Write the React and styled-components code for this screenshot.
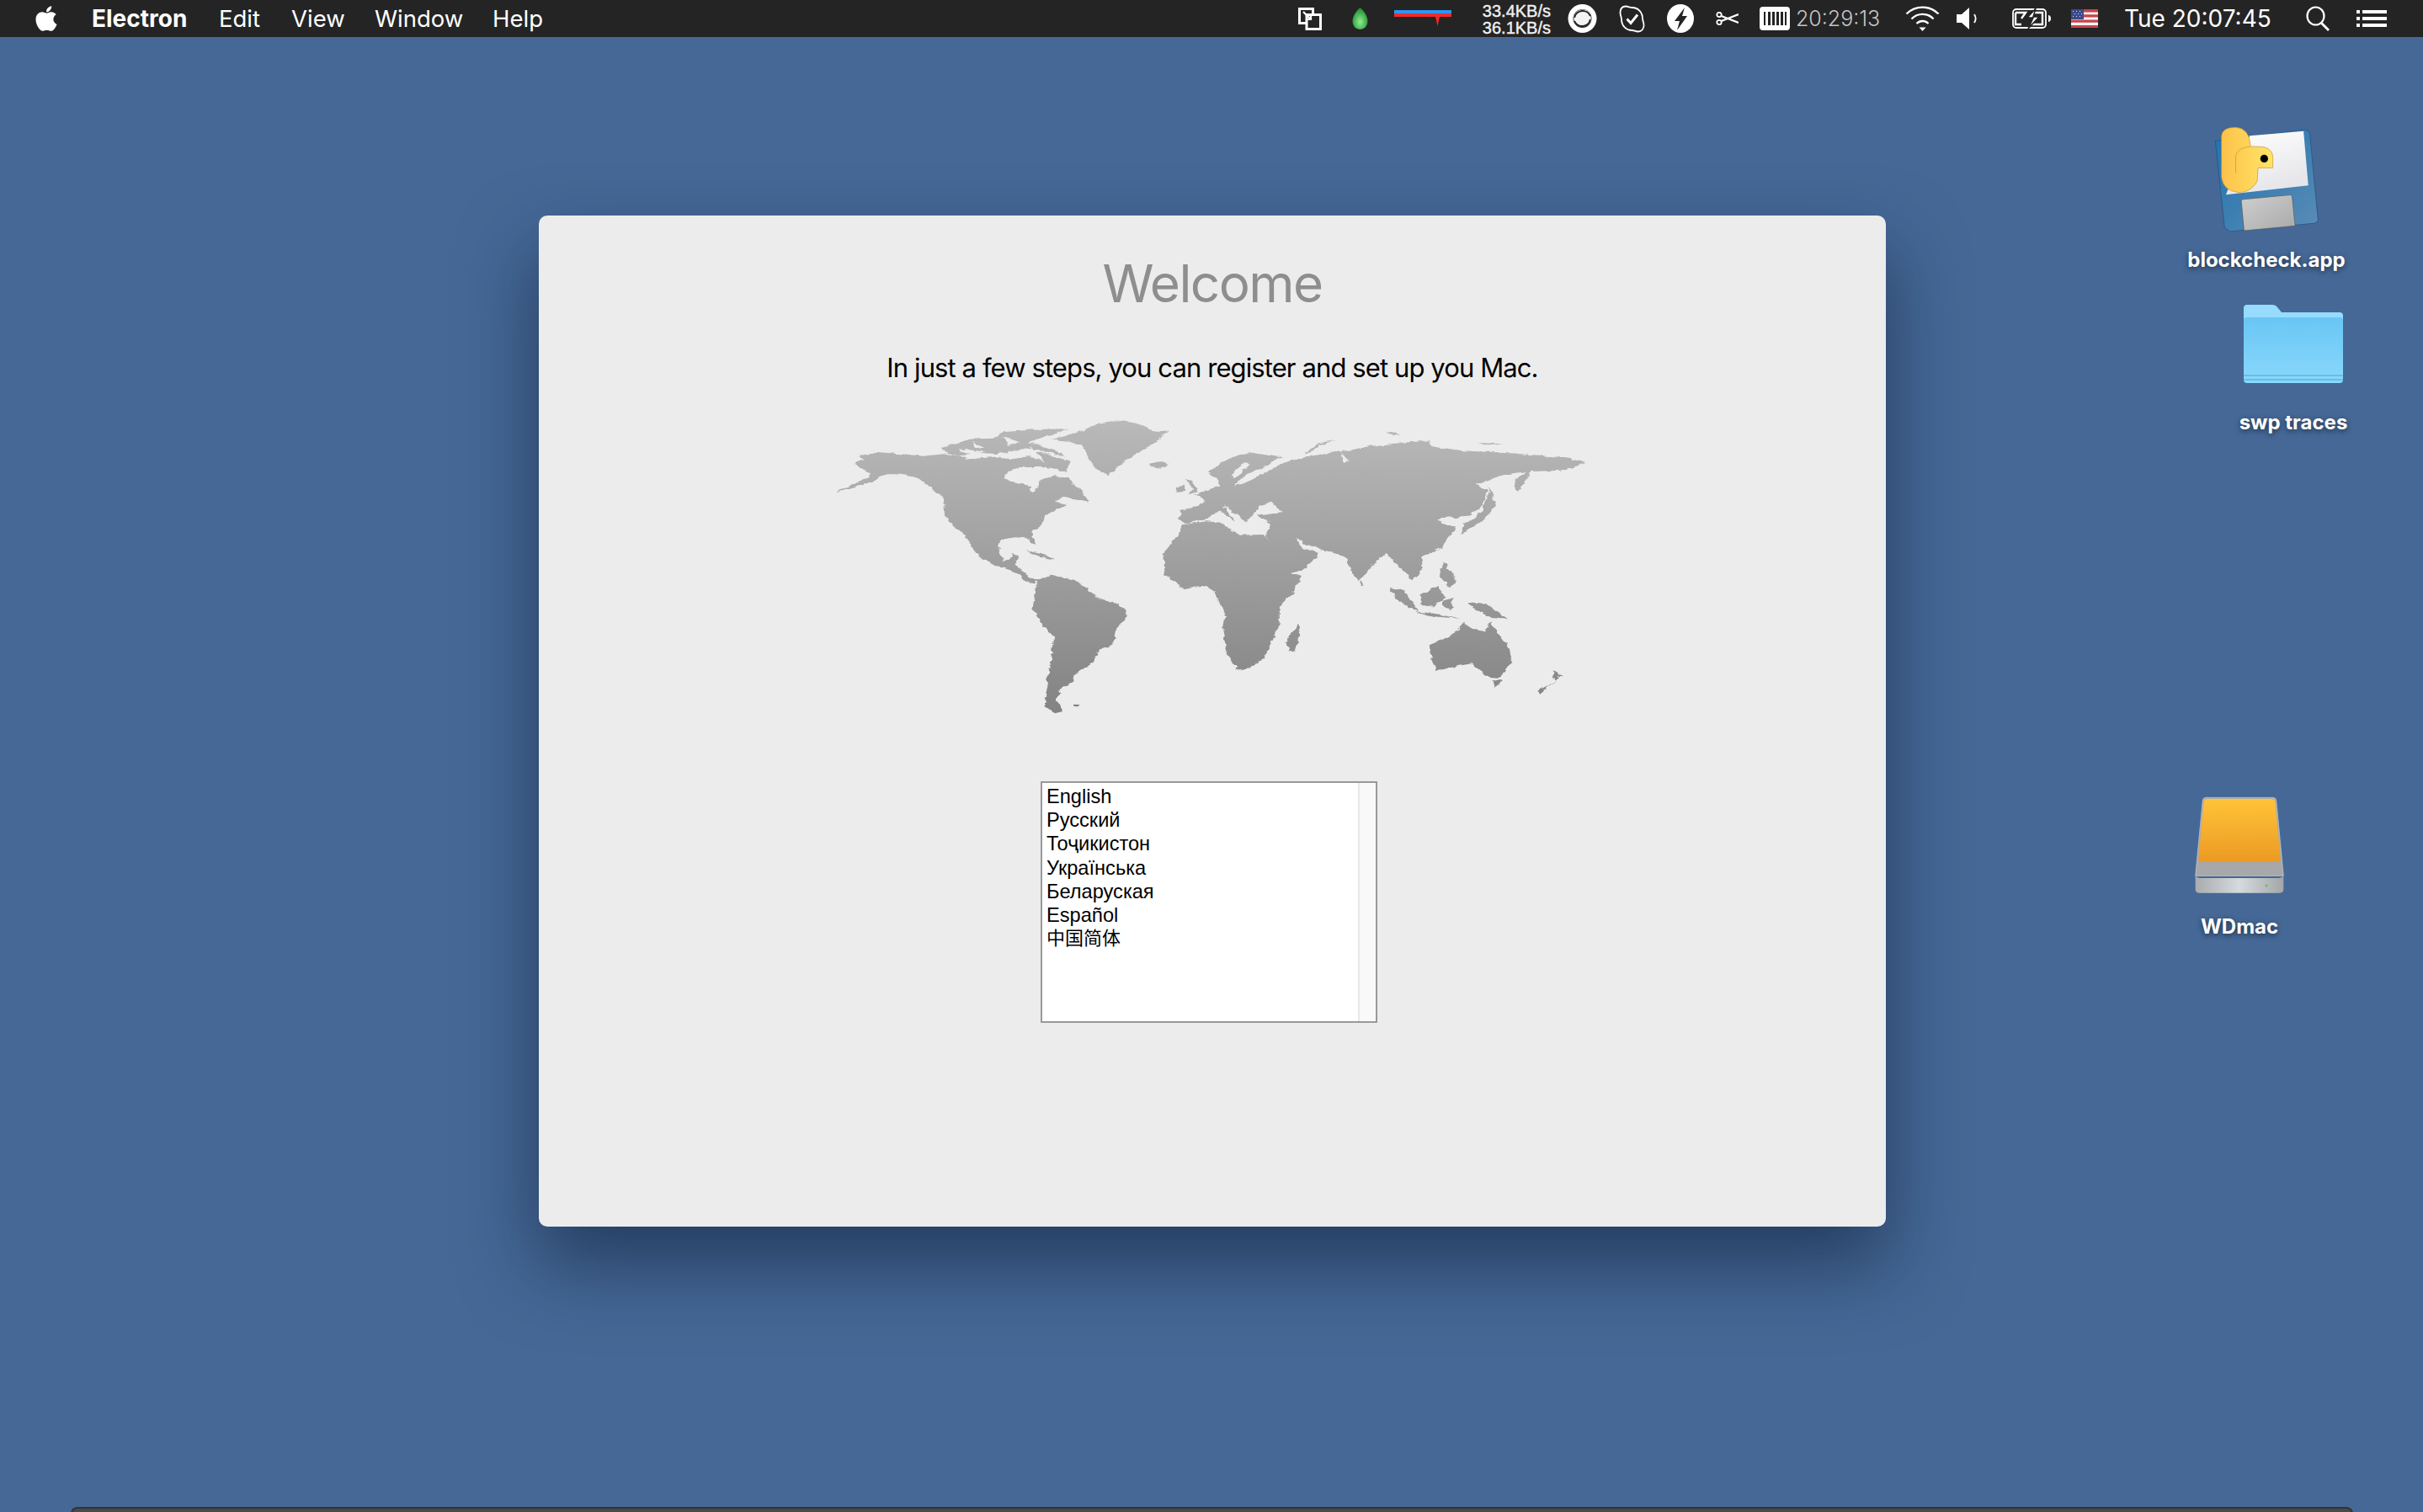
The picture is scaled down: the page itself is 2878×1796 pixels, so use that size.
import React from 'react'
import styled, { createGlobalStyle } from 'styled-components'
import { FaApple } from 'react-icons/fa'

const GlobalStyle = createGlobalStyle`
  html, body {
    margin: 0;
    padding: 0;
    background: #456896;
    overflow: hidden;
  }
`

const Desktop = styled.div`
  position: relative;
  width: 2878px;
  height: 1796px;
  overflow: hidden;
  background: #456896;
  font-family: Inter, "Liberation Sans", sans-serif;
`

const MenuBar = styled.div`
  height: 44px;
  background: #242424;
  display: flex;
  align-items: center;
  justify-content: space-between;
  padding: 0 43px 0 42px;
  color: #fff;
`

const MenuLeft = styled.div`
  display: flex;
  align-items: center;
`

const AppleLogo = styled(FaApple)`
  width: 30px;
  height: 34px;
  margin-right: 39px;
  margin-left: -2px;
`

const MenuItem = styled.span`
  font-size: ${(p) => (p.$bold ? 28 : 27.5)}px;
  line-height: 44px;
  font-weight: ${(p) => (p.$bold ? 700 : 400)};
  width: ${(p) => p.$w}px;
  white-space: nowrap;
`

const Tray = styled.div`
  display: flex;
  align-items: center;
  height: 44px;
`

const TrayItem = styled.div`
  margin-left: ${(p) => p.$ml}px;
  width: ${(p) => p.$w}px;
  height: 44px;
  flex: none;
  display: flex;
  align-items: center;
  white-space: nowrap;
  svg {
    display: block;
  }
`

const NetSpeed = styled.div`
  font-family: "Liberation Sans", sans-serif;
  font-size: 20px;
  line-height: 20px;
  font-weight: 400;
  color: #f0f0f0;
  -webkit-text-stroke: 0.4px #f0f0f0;
  text-align: right;
  width: 100%;
  margin-top: 2px;
`

const Uptime = styled.span`
  font-size: 25px;
  font-weight: 300;
  color: #c4c4c4;
`

const Clock = styled.span`
  font-size: 28px;
  font-weight: 400;
  color: #fff;
`

const Window = styled.div`
  position: absolute;
  left: 640px;
  top: 256px;
  width: 1600px;
  height: 1201px;
  background: #ececec;
  border-radius: 10px;
  box-shadow: 0 44px 90px rgba(10, 25, 50, 0.55);
  display: flex;
  flex-direction: column;
  align-items: center;
  padding-top: 43px;
  box-sizing: border-box;
`

const Title = styled.h1`
  margin: 0;
  font-size: 62px;
  line-height: 76px;
  font-weight: 400;
  color: #8e8e8e;
  letter-spacing: -1.6px;
`

const Subtitle = styled.p`
  margin: 42px 0 0;
  font-size: 31px;
  line-height: 40px;
  font-weight: 400;
  color: #000;
  letter-spacing: -0.9px;
`

const MapBox = styled.svg`
  display: block;
  width: 920px;
  height: 380px;
  margin-top: 23px;
  flex: none;
`

const ListBox = styled.div`
  margin: 68px 8px 0 0;
  width: 400px;
  height: 287px;
  box-sizing: border-box;
  border: 2px solid #999;
  background: #fff;
  display: flex;
`

const ListRows = styled.ul`
  list-style: none;
  margin: 0;
  padding: 2px 0 0 5px;
  flex: 1;
  font-family: "Liberation Sans", "Noto Sans CJK SC", sans-serif;
  font-size: 23.6px;
  color: #000;
`

const ListRow = styled.li`
  height: ${(p) => p.$h || 28}px;
  line-height: 28px;
  font-size: ${(p) => (p.$cjk ? '22px' : 'inherit')};
`

const ScrollTrack = styled.div`
  width: 21px;
  box-sizing: border-box;
  background: #f9f9f9;
  border-left: 2px solid #e8e8e8;
`

const DesktopIcon = styled.div`
  position: absolute;
  left: ${(p) => p.$x}px;
  top: ${(p) => p.$y}px;
  width: 240px;
  display: flex;
  flex-direction: column;
  align-items: center;
  svg {
    display: block;
  }
`

const IconLabel = styled.div`
  margin-top: ${(p) => p.$mt}px;
  font-family: Inter, "Liberation Sans", sans-serif;
  font-size: 24px;
  line-height: 30px;
  font-weight: 700;
  color: #fff;
  text-shadow: 0 2px 6px rgba(0, 0, 0, 0.55);
  white-space: nowrap;
`

const Dock = styled.div`
  position: absolute;
  left: 84px;
  right: 83px;
  top: 1790px;
  height: 8px;
  box-sizing: border-box;
  background: #4a4a4a;
  border: 2px solid #333;
  border-radius: 8px 8px 0 0;
`

const idiomas = ['English', 'Русский', 'Тоҷикистон', 'Українська', 'Беларуская', 'Español', '中国简体']

// coordenadas tiradas do zoom do mapa (1568x1140)
const continentes = [
  // america do norte
  'M18,315 L60,298 L95,275 L125,250 L150,250 L185,262 L212,292 L240,335 L242,395 L262,440 L280,462 L303,525 L318,550 L345,575 L375,592 L400,622 L422,640 L432,628 L412,618 L400,590 L388,575 L392,540 L382,535 L360,562 L350,520 L355,485 L385,472 L410,475 L425,507 L420,455 L440,430 L445,400 L470,375 L490,360 L465,347 L482,330 L505,340 L535,350 L520,310 L510,290 L490,265 L465,255 L432,272 L430,300 L422,316 L410,290 L385,280 L362,262 L370,240 L400,225 L440,225 L470,235 L490,245 L497,205 L470,190 L440,172 L410,182 L380,196 L340,190 L290,196 L240,178 L200,185 L150,178 L105,170 L68,186 L80,198 L60,210 L72,232 L92,244 L85,262 L60,285 Z',
  // ilhas do artico
  'M238,155 L290,125 L340,122 L360,100 L430,90 L495,88 L450,113 L412,135 L460,160 L490,188 L445,168 L400,160 L350,178 L300,172 L270,188 L240,172 Z',
  // groenlandia e islandia
  'M458,125 L510,105 L550,70 L590,58 L632,70 L665,95 L697,95 L672,130 L660,150 L625,180 L600,215 L575,252 L550,236 L535,195 L520,150 L490,132 Z',
  'M655,212 L680,205 L697,212 L680,227 L660,222 Z',
  // caribe
  'M405,522 L440,535 L470,555 L445,548 L415,532 Z',
  // america do sul
  'M430,628 L455,608 L490,620 L530,650 L550,690 L590,715 L610,735 L605,770 L590,800 L585,855 L555,875 L540,925 L515,955 L500,990 L475,1020 L470,1060 L482,1095 L465,1102 L445,1072 L445,1020 L455,950 L462,830 L440,790 L420,730 L425,680 Z',
  'M502,1070 L516,1070 L512,1078 L502,1076 Z',
  // africa
  'M725,430 L770,418 L802,422 L835,467 L888,465 L905,500 L935,600 L965,615 L950,665 L920,725 L920,790 L905,840 L890,905 L860,940 L835,948 L815,890 L805,810 L810,760 L790,670 L770,648 L725,660 L690,610 L685,530 L710,480 Z',
  'M958,785 L963,810 L950,878 L938,880 L934,840 Z',
  // eurasia
  'M718,378 L745,370 L772,345 L748,322 L782,300 L800,292 L790,265 L775,240 L820,190 L860,172 L922,190 L900,215 L850,255 L830,290 L872,262 L925,210 L970,190 L1000,180 L1030,172 L1060,165 L1100,150 L1180,136 L1222,130 L1225,150 L1290,166 L1400,176 L1470,186 L1510,195 L1540,210 L1520,222 L1490,236 L1432,240 L1400,312 L1395,272 L1420,240 L1372,252 L1318,287 L1340,305 L1330,365 L1305,395 L1280,408 L1262,400 L1248,405 L1240,415 L1275,440 L1255,490 L1250,510 L1205,545 L1210,590 L1190,628 L1165,585 L1135,530 L1115,560 L1080,632 L1050,540 L1000,515 L975,500 L952,475 L965,512 L1000,530 L990,555 L965,590 L935,608 L905,505 L892,470 L903,425 L872,395 L925,385 L905,350 L880,360 L870,385 L850,420 L838,395 L805,360 L830,420 L800,380 L770,410 L730,425 L718,410 Z',
  // ilhas britanicas
  'M728,268 L742,272 L755,312 L735,322 L745,300 Z',
  'M712,295 L728,290 L728,312 L714,314 Z',
  // japao e sakhalin
  'M1345,298 L1358,360 L1345,390 L1312,440 L1288,462 L1292,430 L1330,385 Z',
  // sri lanka
  'M1085,625 L1092,650 L1085,650 Z',
  // filipinas, sumatra, borneo, java, celebes, nova guine
  'M1252,560 L1262,590 L1280,630 L1268,655 L1245,618 Z',
  'M1145,650 L1175,670 L1202,738 L1185,728 L1155,692 Z',
  'M1206,680 L1240,648 L1254,690 L1230,722 L1208,716 Z',
  'M1192,738 L1240,748 L1285,764 L1225,756 Z',
  'M1250,700 L1272,690 L1268,735 L1252,728 Z',
  'M1305,705 L1340,712 L1382,768 L1350,762 L1325,738 L1310,730 Z',
  // australia, tasmania e nova zelandia
  'M1225,860 L1260,830 L1295,780 L1312,797 L1335,815 L1345,775 L1385,870 L1390,915 L1365,975 L1335,970 L1310,925 L1275,935 L1238,950 L1228,910 Z',
  'M1352,985 L1368,985 L1360,1012 Z',
  'M1472,945 L1492,968 L1465,1002 L1450,1032 L1444,1022 L1478,985 Z',
  // artico russo
  'M972,175 L1000,138 L1038,128 L1000,145 L985,172 Z',
  'M1135,100 L1170,108 L1150,115 Z',
  'M1320,138 L1375,142 L1340,148 Z',
]

// cortes claros por cima: canais do artico e mares internos
const cortes = [
  'M300,130 L320,155 L305,160 Z',
  'M360,118 L395,135 L370,150 Z',
  'M270,160 L330,170 L290,176 Z',
  'M415,150 L445,205 L415,190 Z',
  'M850,205 L858,215 L830,265 L822,255 Z',
  'M1042,170 L1060,200 L1050,205 Z',
]

const Sync = () => (
  <svg width="28" height="28" viewBox="0 0 28 28" fill="none">
    <path d="M1.5 2.5h16v17h-16z" fill="none" stroke="#fff" strokeWidth="3" />
    <path d="M10 9.5h16.5v17H10z" fill="#242424" stroke="#fff" strokeWidth="3" />
    <path d="M6 6l9 9M15 9v6H9" stroke="#fff" strokeWidth="2.2" />
  </svg>
)

const Drop = () => (
  <svg width="19" height="26" viewBox="0 0 19 26">
    <defs>
      <radialGradient id="gota" cx="0.5" cy="0.65" r="0.6">
        <stop offset="0" stopColor="#8ff08f" />
        <stop offset="1" stopColor="#1f8f2f" />
      </radialGradient>
    </defs>
    <path d="M9.5 0C14 4 18.5 10 18.5 16.5A9 9.5 0 0 1 .5 16.5C.5 10 5 4 9.5 0Z" fill="url(#gota)" />
  </svg>
)

const NetBars = () => (
  <svg width="68" height="20" viewBox="0 0 68 20">
    <rect x="0" y="0" width="68" height="4" fill="#2f96f0" />
    <rect x="0" y="4" width="68" height="4" fill="#ef2b2b" />
    <path d="M49 8h5l-2.5 11z" fill="#ef2b2b" />
  </svg>
)

const SyncCircle = () => (
  <svg width="35" height="34" viewBox="0 0 35 34">
    <circle cx="17.5" cy="17" r="17" fill="#fff" />
    <circle cx="17.5" cy="17" r="11" fill="#242424" />
    <path d="M7 15C9 8 15 5 22 7L27 11L28 19C26 25 20 28 13 26L8 22Z" fill="#fff" opacity="0.95" />
    <path d="M8 16a10 10 0 0 1 19-2M27 18a10 10 0 0 1-19 2" fill="none" stroke="#242424" strokeWidth="2" />
  </svg>
)

const SkypeCheck = () => (
  <svg width="31" height="33" viewBox="0 0 31 33" fill="none">
    <path d="M8 1.5C11 1.5 13 3 15.5 3C23 3 28 9 28 16C28 19 30 21 29.5 25C29 29 26 31.5 22.5 31.5C19.5 31.5 18 30 15.5 30C8 30 3 24 3 17C3 14 1.2 12 1.5 8.5C1.8 4 4.5 1.5 8 1.5Z" stroke="#fff" strokeWidth="1.8" />
    <path d="M9.5 16.5l4.5 5l8-10" stroke="#fff" strokeWidth="3" />
  </svg>
)

const BoltCircle = () => (
  <svg width="32" height="34" viewBox="0 0 32 34">
    <ellipse cx="16" cy="17" rx="16" ry="17" fill="#fff" />
    <path d="M21 4L9 20h6l-3 11L24 14h-6z" fill="#242424" />
  </svg>
)

const Scissors = () => (
  <svg width="27" height="16" viewBox="0 0 27 16" fill="none">
    <circle cx="4" cy="3.5" r="2.7" stroke="#fff" strokeWidth="1.8" />
    <circle cx="4" cy="12.5" r="2.7" stroke="#fff" strokeWidth="1.8" />
    <path d="M6.5 5L27 13M6.5 11L27 3" stroke="#fff" strokeWidth="2.4" />
  </svg>
)

const RamChip = () => (
  <svg width="36" height="28" viewBox="0 0 36 28">
    <rect x="0" y="0" width="36" height="28" rx="4" fill="#fff" />
    <path d="M5 6h2v16H5zM10 6h3v16h-3zM15 6h3v16h-3zM20 6h3v16h-3zM25 6h3v16h-3zM30 6h2v16h-2z" fill="#242424" />
  </svg>
)

const Wifi = () => (
  <svg width="41" height="30" viewBox="0 0 41 30" fill="none" stroke="#fff" strokeWidth="2.4">
    <path d="M1.5 9.5C12 -1 29 -1 39.5 9.5" />
    <path d="M7.5 15.5C14.5 8 26.5 8 33.5 15.5" />
    <path d="M13.5 21C17.5 17 23.5 17 27.5 21" />
    <path d="M16.5 25.5h8l-4 4.5z" fill="#fff" stroke="none" />
  </svg>
)

const Speaker = () => (
  <svg width="25" height="26" viewBox="0 0 25 26" fill="none">
    <path d="M0 8h6l9-8v26l-9-8H0z" fill="#fff" />
    <path d="M21 8c2 3 2 7 0 10" stroke="#fff" strokeWidth="1.8" />
  </svg>
)

const Battery = () => (
  <svg width="46" height="24" viewBox="0 0 46 24" fill="none">
    <rect x="1" y="1" width="39" height="22" rx="4" stroke="#fff" strokeWidth="1.8" />
    <path d="M4 5h12l-5 7M4 5v14h7M22 19h14V5H26" stroke="#fff" strokeWidth="2.4" />
    <path d="M28 0L18 11h7L19 24L32 10h-7z" fill="#fff" stroke="#242424" strokeWidth="1.6" />
    <path d="M43 8c2 0 3 2 3 4s-1 4-3 4z" fill="#fff" />
  </svg>
)

const Flag = () => (
  <svg width="32" height="22" viewBox="0 0 32 22">
    <rect width="32" height="22" fill="#f4f4f4" />
    <path d="M0 0h32v3.4H0zM0 6.3h32v3.1H0zM0 12.6h32v3.1H0zM0 18.9h32V22H0z" fill="#c8434a" />
    <rect width="15" height="12" fill="#3b4a8c" />
    <path d="M2 2h1v1H2zM6 2h1v1H6zM10 2h1v1h-1zM4 5h1v1H4zM8 5h1v1H8zM12 5h1v1h-1zM2 8h1v1H2zM6 8h1v1H6zM10 8h1v1h-1z" fill="#ddd" />
  </svg>
)

const Search = () => (
  <svg width="28" height="30" viewBox="0 0 28 30" fill="none" stroke="#fff">
    <ellipse cx="11.5" cy="12" rx="10" ry="10.5" strokeWidth="2.2" />
    <path d="M18 20l9 9" strokeWidth="2.8" />
  </svg>
)

const ListIcon = () => (
  <svg width="36" height="20" viewBox="0 0 36 20" fill="#fff">
    <path d="M0 0h4v4H0zM0 8h4v4H0zM0 16h4v4H0zM7 0h29v4H7zM7 8h29v4H7zM7 16h29v4H7z" />
  </svg>
)

const PythonDisk = () => (
  <svg width="124" height="126" viewBox="208 58 374 380">
    <defs>
      <linearGradient id="disco" x1="0" y1="0" x2="1" y2="1">
        <stop offset="0" stopColor="#2272ae" />
        <stop offset="1" stopColor="#5a8cb5" />
      </linearGradient>
      <linearGradient id="etiqueta" x1="0" y1="0" x2="0.4" y2="1">
        <stop offset="0" stopColor="#ffffff" />
        <stop offset="1" stopColor="#e6e6ea" />
      </linearGradient>
      <linearGradient id="tampa" x1="0" y1="0" x2="1" y2="1">
        <stop offset="0" stopColor="#cfcfcf" />
        <stop offset="1" stopColor="#a9a9a9" />
      </linearGradient>
      <linearGradient id="cobra" x1="0" y1="0" x2="1" y2="0">
        <stop offset="0" stopColor="#fdc24a" />
        <stop offset="1" stopColor="#ffe566" />
      </linearGradient>
    </defs>
    <path d="M212 110L535 70L550 80L580 395L570 405L265 435L245 420Z" fill="url(#disco)" stroke="#1f4f80" strokeWidth="2" />
    <path d="M335 92L528 75L545 270L250 303Z" fill="url(#etiqueta)" />
    <path d="M305 325Q306 320 312 320L480 304Q486 304 487 310L498 415L315 432Z" fill="url(#tampa)" stroke="#555" strokeWidth="2" />
    <path d="M234 95Q235 62 285 62Q335 65 338 130L385 132Q418 140 418 170L418 207L365 207L362 255Q340 295 295 295Q240 290 234 240Z" fill="url(#cobra)" stroke="#c8902a" strokeWidth="2" />
    <path d="M285 226L285 165Q290 135 338 130" fill="none" stroke="#c8902a" strokeWidth="2" />
    <circle cx="387" cy="174" r="14" fill="#000" />
  </svg>
)

const Folder = () => (
  <svg width="118" height="94" viewBox="0 0 118 94">
    <defs>
      <linearGradient id="pasta" x1="0" y1="0" x2="0" y2="1">
        <stop offset="0" stopColor="#68c6f4" />
        <stop offset="1" stopColor="#8ad8fc" />
      </linearGradient>
    </defs>
    <path d="M0 4Q0 0 4 0H34Q38 0 40 3L45 9H114Q118 9 118 13V30H0Z" fill="#97dcff" />
    <path d="M0 18Q0 15 4 15H114Q118 15 118 18V89Q118 93 114 93H4Q0 93 0 89Z" fill="url(#pasta)" />
    <path d="M0 83h118v2H0zM0 88h118v2H0z" fill="#66bfeb" />
  </svg>
)

const Drive = () => (
  <svg width="106" height="116" viewBox="140 77 320 346">
    <defs>
      <linearGradient id="laranja" x1="0" y1="0" x2="0" y2="1">
        <stop offset="0" stopColor="#ffc339" />
        <stop offset="1" stopColor="#ec9a22" />
      </linearGradient>
      <linearGradient id="metal" x1="0" y1="0" x2="1" y2="0">
        <stop offset="0" stopColor="#a9acae" />
        <stop offset="0.5" stopColor="#d5dadc" />
        <stop offset="1" stopColor="#a4a6a8" />
      </linearGradient>
    </defs>
    <path d="M168 90Q169 79 180 79H420Q431 79 432 90L458 360H142Z" fill="#a8a8aa" stroke="#d0d0d0" strokeWidth="2" />
    <path d="M172 95Q173 84 184 84H416Q427 84 428 95L447 300Q447 310 437 310H163Q153 310 153 300Z" fill="url(#laranja)" />
    <path d="M142 360Q150 368 165 368H435Q450 368 458 360V408Q458 421 445 421H155Q142 421 142 408Z" fill="url(#metal)" />
    <circle cx="397" cy="395" r="5" fill="#63c95a" />
  </svg>
)

export default function App() {
  return (
    <Desktop>
      <GlobalStyle />
      <MenuBar>
        <MenuLeft>
          <AppleLogo />
          <MenuItem $bold $w={151}>Electron</MenuItem>
          <MenuItem $w={86}>Edit</MenuItem>
          <MenuItem $w={99}>View</MenuItem>
          <MenuItem $w={140}>Window</MenuItem>
          <MenuItem>Help</MenuItem>
        </MenuLeft>
        <Tray>
          <TrayItem $ml={0} $w={28}><Sync /></TrayItem>
          <TrayItem $ml={36} $w={19}><Drop /></TrayItem>
          <TrayItem $ml={31} $w={68}><NetBars /></TrayItem>
          <TrayItem $ml={36} $w={82}><NetSpeed>33.4KB/s<br />36.1KB/s</NetSpeed></TrayItem>
          <TrayItem $ml={20} $w={35}><SyncCircle /></TrayItem>
          <TrayItem $ml={26} $w={31}><SkypeCheck /></TrayItem>
          <TrayItem $ml={26} $w={32}><BoltCircle /></TrayItem>
          <TrayItem $ml={26} $w={27}><Scissors /></TrayItem>
          <TrayItem $ml={25} $w={36}><RamChip /></TrayItem>
          <TrayItem $ml={7} $w={97}><Uptime>20:29:13</Uptime></TrayItem>
          <TrayItem $ml={33} $w={41}><Wifi /></TrayItem>
          <TrayItem $ml={20} $w={25}><Speaker /></TrayItem>
          <TrayItem $ml={41} $w={46}><Battery /></TrayItem>
          <TrayItem $ml={24} $w={32}><Flag /></TrayItem>
          <TrayItem $ml={31} $w={176}><Clock>Tue 20:07:45</Clock></TrayItem>
          <TrayItem $ml={40} $w={28}><Search /></TrayItem>
          <TrayItem $ml={32} $w={36}><ListIcon /></TrayItem>
        </Tray>
      </MenuBar>

      <DesktopIcon $x={2572} $y={150}>
        <PythonDisk />
        <IconLabel $mt={18}>blockcheck.app</IconLabel>
      </DesktopIcon>
      <DesktopIcon $x={2604} $y={362}>
        <Folder />
        <IconLabel $mt={31}>swp traces</IconLabel>
      </DesktopIcon>
      <DesktopIcon $x={2540} $y={946}>
        <Drive />
        <IconLabel $mt={24}>WDmac</IconLabel>
      </DesktopIcon>

      <Window>
        <Title>Welcome</Title>
        <Subtitle>In just a few steps, you can register and set up you Mac.</Subtitle>
        <MapBox viewBox="0 0 1568 1140" preserveAspectRatio="none">
          <defs>
            <linearGradient id="mapa" gradientUnits="userSpaceOnUse" x1="0" y1="60" x2="0" y2="1100">
              <stop offset="0" stopColor="#b9b9b9" />
              <stop offset="1" stopColor="#838383" />
            </linearGradient>
            {/* deixa a costa irregular */}
            <filter id="costa" x="-5%" y="-5%" width="110%" height="110%">
              <feTurbulence type="fractalNoise" baseFrequency="0.05" numOctaves="3" seed="4" result="ruido" />
              <feDisplacementMap in="SourceGraphic" in2="ruido" scale="14" xChannelSelector="R" yChannelSelector="G" />
            </filter>
          </defs>
          <g filter="url(#costa)">
            {continentes.map((d, i) => (
              <path key={i} d={d} fill="url(#mapa)" />
            ))}
            {cortes.map((d, i) => (
              <path key={i} d={d} fill="#ececec" />
            ))}
          </g>
        </MapBox>
        <ListBox>
          <ListRows>
            {idiomas.map((idioma, i) => (
              <ListRow key={idioma} $h={i === 2 ? 29 : 28} $cjk={i === 6}>{idioma}</ListRow>
            ))}
          </ListRows>
          <ScrollTrack />
        </ListBox>
      </Window>

      <Dock />
    </Desktop>
  )
}
